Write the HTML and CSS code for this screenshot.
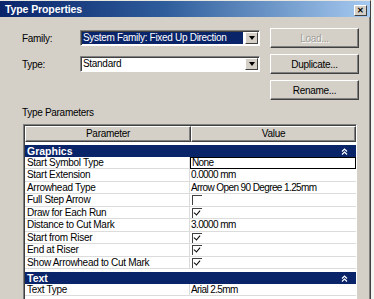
FILE: index.html
```html
<!DOCTYPE html>
<html lang="en">
<head>
    <meta charset="UTF-8">
    <title>Type Properties</title>
    <link rel="stylesheet" href="styles.css">
</head>
<body>
    <div class="dialog">
        <div class="titlebar">
            <span class="title">Type Properties</span>
            <span class="close">&#x2715;</span>
        </div>
        <div class="body">
            <div class="type-grid">
                <span class="label">Family:</span>
                <div class="combo selected">
                    <span class="combo-text">System Family: Fixed Up Direction</span>
                    <span class="combo-btn"><span class="arrow"></span></span>
                </div>
                <button class="btn" disabled>Load...</button>

                <span class="label">Type:</span>
                <div class="combo">
                    <span class="combo-text">Standard</span>
                    <span class="combo-btn"><span class="arrow"></span></span>
                </div>
                <button class="btn">Duplicate...</button>

                <span></span>
                <span></span>
                <button class="btn">Rename...</button>
            </div>

            <div class="section-label">Type Parameters</div>

            <div class="params">
                <div class="params-head">
                    <div class="head-cell">Parameter</div>
                    <div class="head-cell">Value</div>
                </div>

                <div class="group">
                    <span>Graphics</span>
                    <svg class="collapse" width="7" height="7" viewBox="0 0 7 7"><path d="M1 3.5 L3.5 1 L6 3.5 M1 6.5 L3.5 4 L6 6.5" stroke="#fff" stroke-width="1.2" fill="none"/></svg>
                </div>
                <div class="row"><div class="name">Start Symbol Type</div><div class="value editing">None</div></div>
                <div class="row"><div class="name">Start Extension</div><div class="value">0.0000 mm</div></div>
                <div class="row"><div class="name">Arrowhead Type</div><div class="value">Arrow Open 90 Degree 1.25mm</div></div>
                <div class="row"><div class="name">Full Step Arrow</div><div class="value"><span class="check"></span></div></div>
                <div class="row"><div class="name">Draw for Each Run</div><div class="value"><span class="check on"></span></div></div>
                <div class="row"><div class="name">Distance to Cut Mark</div><div class="value">3.0000 mm</div></div>
                <div class="row"><div class="name">Start from Riser</div><div class="value"><span class="check on"></span></div></div>
                <div class="row"><div class="name">End at Riser</div><div class="value"><span class="check on"></span></div></div>
                <div class="row"><div class="name">Show Arrowhead to Cut Mark</div><div class="value"><span class="check on"></span></div></div>

                <div class="group">
                    <span>Text</span>
                    <svg class="collapse" width="7" height="7" viewBox="0 0 7 7"><path d="M1 3.5 L3.5 1 L6 3.5 M1 6.5 L3.5 4 L6 6.5" stroke="#fff" stroke-width="1.2" fill="none"/></svg>
                </div>
                <div class="row"><div class="name">Text Type</div><div class="value">Arial 2.5mm</div></div>
            </div>
        </div>
    </div>
</body>
</html>
```

FILE: styles.css
```css
body {
    margin: 0;
    background: #f4f4f2;
    font-family: "Liberation Sans", Arial, sans-serif;
    font-size: 10px;
    letter-spacing: -0.3px;
    color: #000;
}

.dialog {
    width: 371px;
    height: 299px;
    background: #d4d0c8;
    border-top: 1px solid #e8e6e0;
    border-right: 1px solid #404040;
    box-shadow: inset -1px 0 0 #808080;
    box-sizing: border-box;
    overflow: hidden;
}

.titlebar {
    height: 16px;
    display: flex;
    align-items: center;
    justify-content: space-between;
    padding: 0 3px 0 5px;
    background: linear-gradient(to right, #0a246a, #2f5e9c 45%, #a6caf0);
}

.title {
    color: #fff;
    font-weight: bold;
    font-size: 10.5px;
    letter-spacing: -0.1px;
}

.close {
    width: 13px;
    height: 11px;
    margin-top: 2px;
    background: #d4d0c8;
    border-top: 1px solid #fff;
    border-left: 1px solid #fff;
    border-right: 1px solid #404040;
    border-bottom: 1px solid #404040;
    box-sizing: border-box;
    font-size: 8px;
    font-weight: bold;
    line-height: 9px;
    text-align: center;
    letter-spacing: 0;
}

.body {
    padding: 11px 12px 0 22px;
}

.type-grid {
    display: grid;
    grid-template-columns: 48px 180px 89px;
    grid-template-rows: 20px 20px 20px;
    column-gap: 10px;
    row-gap: 6px;
    align-items: center;
}

.combo {
    height: 16px;
    display: flex;
    background: #fff;
    border-top: 1px solid #808080;
    border-left: 1px solid #808080;
    border-right: 1px solid #fff;
    border-bottom: 1px solid #fff;
    box-shadow: inset 1px 1px 0 #404040;
    box-sizing: border-box;
    padding: 1px;
}

.combo-text {
    flex: 1;
    padding-left: 1px;
    line-height: 12px;
    white-space: nowrap;
    overflow: hidden;
}

.combo.selected .combo-text {
    background: #0a246a;
    color: #fff;
    margin-right: 2px;
}

.combo-btn {
    width: 13px;
    background: #d4d0c8;
    border-top: 1px solid #fff;
    border-left: 1px solid #fff;
    border-right: 1px solid #404040;
    border-bottom: 1px solid #404040;
    box-sizing: border-box;
    display: flex;
    align-items: center;
    justify-content: center;
}

.arrow {
    width: 0;
    height: 0;
    border-left: 3px solid transparent;
    border-right: 3px solid transparent;
    border-top: 4px solid #000;
}

.btn {
    height: 20px;
    font-family: inherit;
    font-size: 10px;
    letter-spacing: inherit;
    color: #000;
    background: #d4d0c8;
    border-top: 1px solid #fff;
    border-left: 1px solid #fff;
    border-right: 1px solid #404040;
    border-bottom: 1px solid #404040;
    box-shadow: inset -1px -1px 0 #808080;
    padding: 0;
}

.btn:disabled {
    color: #a09e98;
    text-shadow: 1px 1px 0 #fff;
}

.section-label {
    margin-top: 7px;
    line-height: 12px;
}

.params {
    margin: 5px 0 0 1px;
    width: 334px;
    height: 200px;
    background: #fff;
    border-top: 1px solid #808080;
    border-left: 1px solid #808080;
    border-right: 1px solid #fff;
    box-shadow: inset 1px 1px 0 #404040;
    box-sizing: border-box;
    padding: 1px 0 0 1px;
}

.params-head {
    display: grid;
    grid-template-columns: 166px 1fr;
    height: 16px;
    background: #d4d0c8;
}

.head-cell {
    border-top: 1px solid #fff;
    border-left: 1px solid #fff;
    border-right: 1px solid #404040;
    border-bottom: 1px solid #404040;
    box-shadow: inset -1px -1px 0 #808080;
    text-align: center;
    line-height: 14px;
}

.group {
    margin-top: 3px;
    height: 12px;
    display: flex;
    align-items: center;
    justify-content: space-between;
    padding: 0 8px 0 2px;
    background: #0a246a;
    color: #fff;
    font-weight: bold;
    font-size: 10.5px;
    letter-spacing: 0;
}

.group + .row {
    height: 12px;
}

.row {
    display: grid;
    grid-template-columns: 165px 1fr;
    height: 12.5px;
    border-bottom: 1px solid #dcdcdc;
    box-sizing: border-box;
    line-height: 11px;
}

.name {
    padding-left: 2px;
    border-right: 1px solid #dcdcdc;
    white-space: nowrap;
}

.value {
    padding-left: 1px;
    white-space: nowrap;
    letter-spacing: -0.6px;
}

.value.editing {
    outline: 1px solid #000;
    outline-offset: -1px;
    margin-bottom: -1px;
    padding-left: 2px;
}

.check {
    display: inline-block;
    width: 10px;
    height: 10px;
    margin: 1px 0 0 1px;
    vertical-align: top;
    background: #fff;
    border-top: 1px solid #404040;
    border-left: 1px solid #404040;
    box-sizing: border-box;
    position: relative;
}

.check.on::after {
    content: "";
    position: absolute;
    left: 2px;
    top: 0;
    width: 3px;
    height: 5px;
    border-right: 1.5px solid #000;
    border-bottom: 1.5px solid #000;
    transform: rotate(40deg);
}
```
